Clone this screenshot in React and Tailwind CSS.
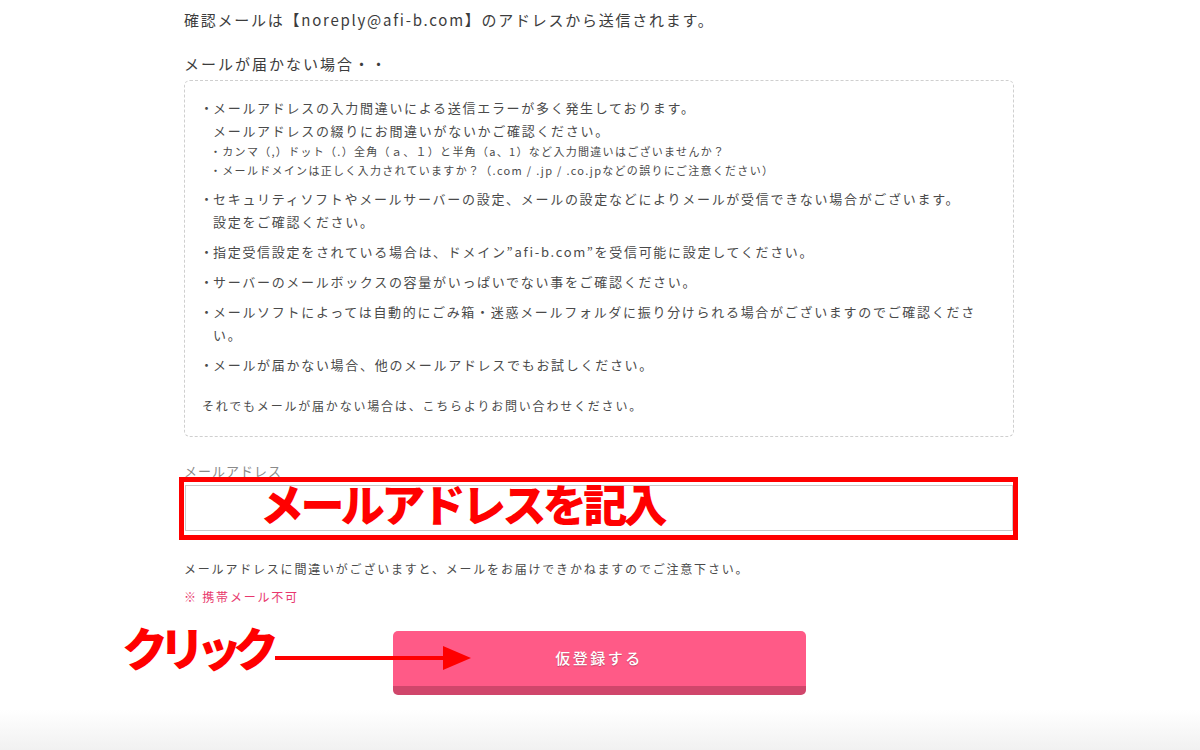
import React from "react";

function Item({ children, sub }) {
  return (
    <div className="flex">
      <span className="w-[13px] shrink-0">・</span>
      <div className="flex-1">
        {children}
        {sub}
      </div>
    </div>
  );
}

export default function App() {
  return (
    <div className="relative h-[750px] w-[1200px] overflow-hidden bg-white font-['Noto_Sans_CJK_JP',sans-serif] text-[#444]">
      <div className="ml-[184px] w-[830px] pt-[8px]">
        <p className="text-[15px] leading-[24px] tracking-[1.75px] text-[#3c3c3c]">
          確認メールは【noreply@afi-b.com】のアドレスから送信されます。
        </p>
        <p className="mt-[20px] text-[15px] leading-[24px] tracking-[2px] text-[#3c3c3c]">
          メールが届かない場合・・
        </p>

        <div className="mt-[4px] rounded-[6px] border border-dashed border-[#cfcfcf] pb-[20px] pl-[15px] pr-[10px] pt-[15px] text-[13px] leading-[23px] tracking-[1.7px] text-[#4a4a4a]">
          <div className="flex flex-col gap-[7px]">
            <Item
              sub={
                <div className="-ml-[3px] text-[11px] leading-[19px] tracking-[1.3px]">
                  <p>・カンマ（,）ドット（.）全角（ａ、１）と半角（a、1）など入力間違いはございませんか？</p>
                  <p>・メールドメインは正しく入力されていますか？（.com / .jp / .co.jpなどの誤りにご注意ください）</p>
                </div>
              }
            >
              メールアドレスの入力間違いによる送信エラーが多く発生しております。
              <br />
              メールアドレスの綴りにお間違いがないかご確認ください。
            </Item>
            <Item>
              セキュリティソフトやメールサーバーの設定、メールの設定などによりメールが受信できない場合がございます。
              <br />
              設定をご確認ください。
            </Item>
            <Item>指定受信設定をされている場合は、ドメイン”afi-b.com”を受信可能に設定してください。</Item>
            <Item>サーバーのメールボックスの容量がいっぱいでない事をご確認ください。</Item>
            <Item>
              メールソフトによっては自動的にごみ箱・迷惑メールフォルダに振り分けられる場合がございますのでご確認くださ
              <br />
              い。
            </Item>
            <Item>メールが届かない場合、他のメールアドレスでもお試しください。</Item>
          </div>
          <p className="mt-[20px] pl-[2px] text-[12px] leading-[20px] tracking-[1.8px]">
            それでもメールが届かない場合は、こちらよりお問い合わせください。
          </p>
        </div>

        <p className="mt-[24px] text-[13px] leading-[20px] tracking-[1px] text-[#8a8a8a]">メールアドレス</p>

        <div className="relative mt-[4px] ml-[1px] w-[828px]">
          <div className="h-[46px] w-full border border-[#c9c9c9] bg-white" />
          <div className="pointer-events-none absolute -bottom-[9px] -left-[6px] -right-[5px] -top-[8px] border-[5px] border-[#ff0000]" />
          <span className="pointer-events-none absolute left-[75px] top-[-4px] whitespace-nowrap text-[44px] font-black leading-[44px] tracking-[-3.6px] text-[#ff0000]">
            メールアドレスを記入
          </span>
        </div>

        <p className="mt-[28px] text-[12px] leading-[20px] tracking-[1.8px] text-[#4a4a4a]">
          メールアドレスに間違いがございますと、メールをお届けできかねますのでご注意下さい。
        </p>
        <p className="mt-[8px] text-[12px] leading-[20px] tracking-[1.8px] text-[#e8386d]">※ 携帯メール不可</p>

        <div className="relative mt-[24px]">
          <button className="mx-auto block h-[64px] w-[413px] rounded-[5px] border-b-[9px] border-[#d0466b] bg-[#ff5a87] pb-[1px] text-[15px] font-medium tracking-[2.5px] text-white [text-shadow:0_1px_1px_rgba(0,0,0,0.25)]">
            仮登録する
          </button>
          <span className="pointer-events-none absolute left-[-62px] top-[-13px] whitespace-nowrap text-[46px] font-black leading-[56px] tracking-[-9px] text-[#ff0000]">
            クリック
          </span>
          <svg
            className="pointer-events-none absolute left-[91px] top-[14px]"
            width="200"
            height="28"
            viewBox="0 0 200 28"
          >
            <rect x="0" y="11" width="175" height="4" fill="#ff0000" />
            <polygon points="168,1 196,13 168,25" fill="#ff0000" />
          </svg>
        </div>
      </div>

      <div className="absolute bottom-0 left-0 h-[40px] w-full bg-gradient-to-b from-white to-[#f1f1f1]" />
    </div>
  );
}
